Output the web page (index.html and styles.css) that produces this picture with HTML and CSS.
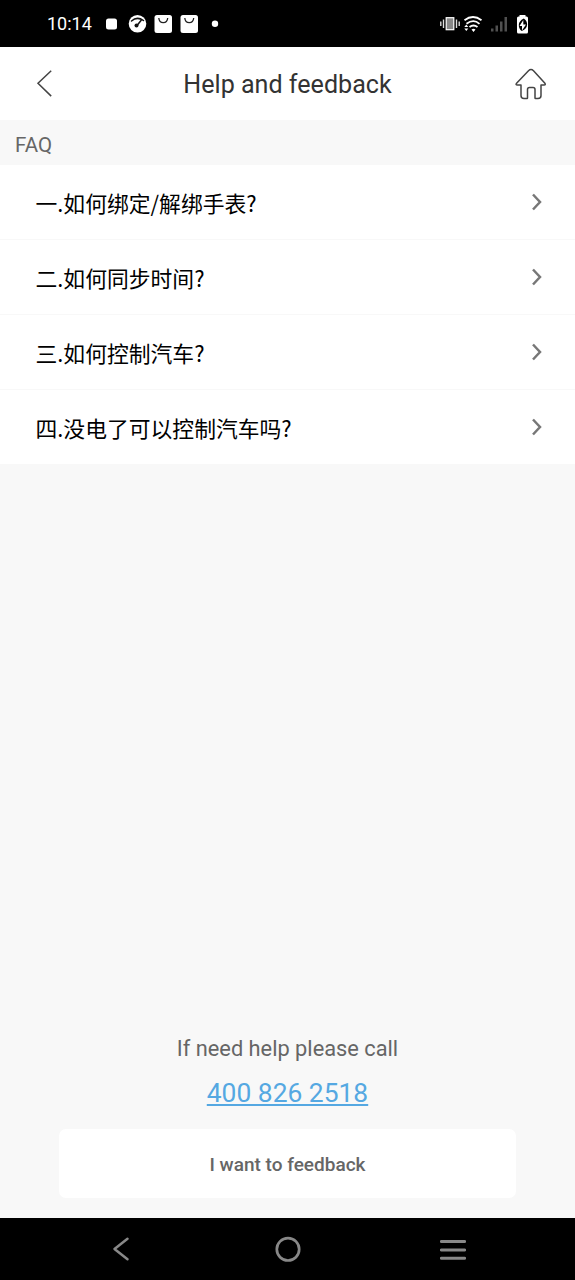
FILE: index.html
```html
<!DOCTYPE html>
<html lang="zh-CN">
<head>
<meta charset="utf-8">
<title>Help and feedback</title>
<link rel="stylesheet" href="styles.css">
</head>
<body>
<div class="screen">
  <div class="status">
    <span class="clock">10:14</span>
    <svg class="notifications" width="118" height="20" viewBox="0 0 118 20">
      <rect x="2" y="4.500" width="11" height="11" rx="2.500" fill="#fff"/>
      <circle cx="33.500" cy="9.800" r="8.800" fill="#fff"/>
      <path d="M27.500 7Q33 2 39.500 6.500M33 11.500l4-5" fill="none" stroke="#111" stroke-width="1.500" stroke-linecap="round"/>
      <circle cx="32.500" cy="11.600" r="2" fill="#111"/>
      <rect x="50.500" y="1" width="17.500" height="18" rx="2.500" fill="#fff"/>
      <path d="M54.800 4C55.300 10.200 63.200 10.200 63.700 4" fill="none" stroke="#222" stroke-width="1.300"/>
      <rect x="76.500" y="1" width="17.500" height="18" rx="2.500" fill="#fff"/>
      <path d="M80.800 4C81.300 10.200 89.200 10.200 89.700 4" fill="none" stroke="#222" stroke-width="1.300"/>
      <circle cx="111" cy="9.800" r="3.200" fill="#fff"/>
    </svg>
    <svg class="indicators" width="90" height="22" viewBox="0 0 90 22">
      <rect x="6.200" y="4.700" width="7.600" height="12" fill="#888" stroke="#fff" stroke-width="1.200"/>
      <path d="M3.500 6.500v8.500M16.500 6.500v8.500M.8 8.500v4.500M19.200 8.500v4.500" stroke="#ddd" stroke-width="1.400"/>
      <g fill="none" stroke="#fff" stroke-width="1.800">
        <path d="M24.500 7.200Q33 .8 41.500 7.200M26.500 10.800Q33.500 5.500 39.500 10.800M29.500 14Q33.500 11 37.500 14"/>
      </g>
      <path d="M31.500 16.500q2-1.500 4 0l-2 2.500zM24.300 14l2-2.500 2 2.500zM24.300 15.500l2 2.500 2-2.500z" fill="#fff"/>
      <g fill="#505050"><rect x="51" y="15.500" width="2.500" height="3"/><rect x="55.500" y="12.500" width="2.500" height="6"/><rect x="60" y="8.500" width="2.500" height="10"/><rect x="64.500" y="4" width="2.500" height="14.500"/></g>
      <rect x="79.500" y="2" width="6" height="3" fill="#fff"/><rect x="77" y="3.500" width="11" height="17" rx="1.500" fill="#fff"/>
      <path d="M83.800 5.500q-5 2.500-5 6.500t3 6q5.300-2.500 5.300-6.500t-3.300-6z" fill="#000"/>
      <path d="M83.300 7l-3.800 6h2.500v4.500l4-6h-2.700z" fill="#fff"/>
    </svg>
  </div>
  <header class="header">
    <svg width="18" height="30" viewBox="0 0 18 30"><path d="M15.200 1.800 2 14.300l13.200 12.800" fill="none" stroke="#444" stroke-width="1.500"/></svg>
    <h1 class="title">Help and feedback</h1>
    <svg width="32" height="34" viewBox="0 0 32 34"><path d="M6 18H2.500Q0 18 1.800 16L13.500 3.700Q16 1.200 18.500 3.700L29.700 16Q31.200 18 29 18H26V28.500Q26 31.500 23 31.500H20.500Q20 31.500 20 31V22.500Q20 20.500 18 20.500H14.500Q12.500 20.500 12.500 22.500V31Q12.500 31.500 12 31.500H9Q6 31.500 6 28.500Z" fill="none" stroke="#444" stroke-width="1.500" stroke-linejoin="round"/></svg>
  </header>
  <h2 class="section">FAQ</h2>
  <ul class="list">
    <li class="row"><span>一.如何绑定/解绑手表?</span><svg class="chevron" width="12" height="20" viewBox="0 0 12 20"><path d="M2 2.500 9 10 2 17.500"/></svg></li>
    <li class="row"><span>二.如何同步时间?</span><svg class="chevron" width="12" height="20" viewBox="0 0 12 20"><path d="M2 2.500 9 10 2 17.500"/></svg></li>
    <li class="row"><span>三.如何控制汽车?</span><svg class="chevron" width="12" height="20" viewBox="0 0 12 20"><path d="M2 2.500 9 10 2 17.500"/></svg></li>
    <li class="row"><span>四.没电了可以控制汽车吗?</span><svg class="chevron" width="12" height="20" viewBox="0 0 12 20"><path d="M2 2.500 9 10 2 17.500"/></svg></li>
  </ul>
  <div class="help">
    <p class="hint">If need help please call</p>
    <a class="phone">400 826 2518</a>
    <button class="feedback">I want to feedback</button>
  </div>
  <nav class="nav">
    <svg width="18" height="26" viewBox="0 0 18 26"><path d="M15.500 2.800 2.500 13 15.500 23.200" fill="none" stroke="#888" stroke-width="2.500" stroke-linecap="round" stroke-linejoin="round"/></svg>
    <svg width="26" height="26" viewBox="0 0 26 26"><circle cx="13" cy="13.300" r="11.200" fill="none" stroke="#888" stroke-width="2.700"/></svg>
    <svg width="26" height="26" viewBox="0 0 26 26"><path d="M1.300 5.500h23.400M1.300 14h23.400M1.300 22.300h23.400" stroke="#888" stroke-width="2.900" stroke-linecap="round"/></svg>
  </nav>
</div>
</body>
</html>
```
FILE: styles.css
```css
* { box-sizing: border-box; }
body { margin: 0; }
.screen {
  width: 575px;
  height: 1280px;
  display: flex;
  flex-direction: column;
  background: #f8f8f8;
  font-family: Roboto, "Noto Sans CJK SC", sans-serif;
}
.status {
  height: 47px;
  flex: none;
  display: flex;
  align-items: center;
  padding: 0 45px 0 47px;
  background: #000;
  color: #fff;
}
.clock { width: 57px; padding-top: 1px; font-size: 18px; font-weight: 400; line-height: 20px; }
.indicators { margin-left: auto; }
.header {
  height: 73px;
  flex: none;
  display: grid;
  grid-template-columns: 40px 1fr 40px;
  align-items: center;
  padding: 1px 20px 0 20px;
  background: #fff;
}
.header svg { justify-self: end; }
.header svg:first-child { margin-right: 6px; }
.header svg:last-child { margin-right: 8px; }
.title {
  margin: 0;
  padding-top: 2px;
  text-align: center;
  font-size: 25.1px;
  font-weight: 400;
  line-height: 30px;
  color: #333;
}
.section {
  height: 45px;
  flex: none;
  margin: 0;
  padding: 3px 15px 0;
  font-size: 20.5px;
  font-weight: 400;
  line-height: 44px;
  color: #666;
}
.list { margin: 0; padding: 0; list-style: none; background: #fff; }
.row {
  height: 75px;
  display: flex;
  align-items: center;
  justify-content: space-between;
  padding: 0 32px 0 35.5px;
  border-bottom: 1px solid #f8f8f8;
  font-family: "Noto Sans CJK SC", sans-serif;
  font-size: 21.8px;
  line-height: 32px;
  color: #000;
}
.row span { padding-top: 1px; }
.chevron { fill: none; stroke: #777; stroke-width: 2.5; }
.help {
  margin-top: auto;
  padding: 0 59px 20px;
  display: flex;
  flex-direction: column;
  align-items: center;
}
.hint { margin: 0 0 13px; font-size: 21.8px; line-height: 30px; color: #666; }
.phone {
  margin-bottom: 20px;
  font-size: 26.4px;
  line-height: 32px;
  color: #55a8e2;
  text-decoration: underline;
}
.feedback {
  width: 100%;
  height: 69px;
  padding: 2px 0 0;
  border: 0;
  border-radius: 7px;
  background: #fff;
  font: 500 19px Roboto, sans-serif;
  color: #666;
}
.nav {
  height: 62px;
  flex: none;
  display: grid;
  grid-template-columns: 1fr 26px 1fr;
  align-items: center;
  padding: 0 109px 0 112px;
  background: #000;
}
.nav svg:nth-child(2) { margin-left: -1.5px; }
.nav svg:last-child { justify-self: end; }
```
